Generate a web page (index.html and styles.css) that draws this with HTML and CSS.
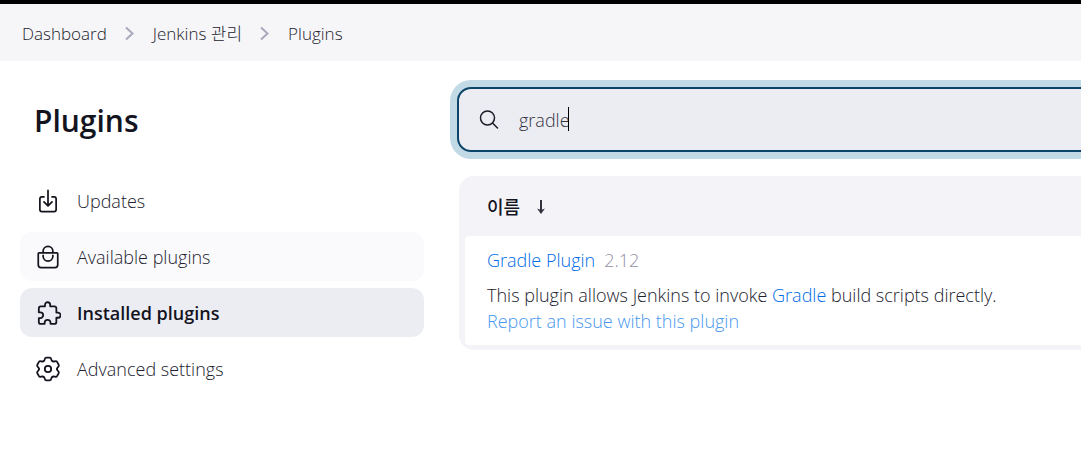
FILE: index.html
```html
<!DOCTYPE html>
<html lang="ko">
<head>
<meta charset="utf-8">
<title>Plugins - Jenkins</title>
<link rel="stylesheet" href="styles.css">
</head>
<body>
<header class="topbar">
  <nav aria-label="Breadcrumb">
    <ol class="crumbs">
      <li><a href="#">Dashboard</a></li>
      <li class="crumb-sep" aria-hidden="true"><svg viewBox="0 0 10 16" width="10" height="16"><path d="M1 1.500 7.500 7.500l-6.500 6"/></svg></li>
      <li><a href="#">Jenkins 관리</a></li>
      <li class="crumb-sep" aria-hidden="true"><svg viewBox="0 0 10 16" width="10" height="16"><path d="M1 1.500 7.500 7.500l-6.500 6"/></svg></li>
      <li><a href="#">Plugins</a></li>
    </ol>
  </nav>
</header>
<div class="page">
  <aside class="side">
    <h1 class="title">Plugins</h1>
    <nav class="tasks" aria-label="Plugins">
      <a class="task" href="#">
        <svg class="icon" viewBox="0 0 512 512"><path d="M336 176h40a40 40 0 0 1 40 40v208a40 40 0 0 1-40 40H136a40 40 0 0 1-40-40V216a40 40 0 0 1 40-40h40"/><path d="m176 272 80 80 80-80M256 48v288"/></svg>
        <span>Updates</span>
      </a>
      <a class="task task-hover" href="#">
        <svg class="icon" viewBox="0 0 512 512"><path d="M80 176h352a16 16 0 0 1 16 16v216c0 30.240-25.760 56-56 56H120c-30.240 0-56-24.510-56-54.750V192a16 16 0 0 1 16-16zM160 176v-32a96 96 0 0 1 96-96 96 96 0 0 1 96 96v32M160 224v16a96 96 0 0 0 96 96 96 96 0 0 0 96-96v-16"/></svg>
        <span>Available plugins</span>
      </a>
      <a class="task task-active" href="#" aria-current="page">
        <svg class="icon" viewBox="-25 5 498 498"><path d="M413.660 246.100H386a2 2 0 0 1-2-2v-77.240A38.860 38.860 0 0 0 345.140 128H267.900a2 2 0 0 1-2-2V98.340c0-27.140-21.500-49.860-48.640-50.330a49.530 49.530 0 0 0-50.400 49.510V126a2 2 0 0 1-2 2H87.620A39.740 39.740 0 0 0 48 167.620V238a2 2 0 0 0 2 2h26.910c29.370 0 53.680 25.480 54.090 54.850.42 29.870-23.510 57.150-53.290 57.150H50a2 2 0 0 0-2 2v70.380A39.740 39.740 0 0 0 87.620 464H158a2 2 0 0 0 2-2v-20.930c0-30.280 24.750-56.350 55-57.060 30.100-.7 57 20.310 57 50.280V462a2 2 0 0 0 2 2h71.140A38.860 38.860 0 0 0 384 425.140v-78a2 2 0 0 1 2-2h28.480c27.630 0 49.520-22.670 49.520-50.400s-23.200-48.640-50.340-48.640z"/></svg>
        <span>Installed plugins</span>
      </a>
      <a class="task" href="#">
        <svg class="icon icon-gear" viewBox="0 0 26 26">
          <defs><path id="lobe" d="M8.500 5.200C10.600 4 9 1.600 11.400 1.600h3.200C17 1.600 15.400 4 17.500 5.200"/></defs>
          <use href="#lobe"/>
          <use href="#lobe" transform="rotate(60 13 13)"/>
          <use href="#lobe" transform="rotate(120 13 13)"/>
          <use href="#lobe" transform="rotate(180 13 13)"/>
          <use href="#lobe" transform="rotate(240 13 13)"/>
          <use href="#lobe" transform="rotate(300 13 13)"/>
          <circle cx="13" cy="13" r="3.200"/>
        </svg>
        <span>Advanced settings</span>
      </a>
    </nav>
  </aside>
  <main class="content">
    <label class="search">
      <svg class="search-icon" viewBox="0 0 20 20" aria-hidden="true"><circle cx="8.500" cy="8" r="7"/><path d="m13.500 13 5 5"/></svg>
      <input class="search-input" type="text" value="gradle" aria-label="Search installed plugins">
      <span class="caret" aria-hidden="true"></span>
    </label>
    <div class="panel">
      <table class="plugins">
        <thead>
          <tr><th scope="col"><button class="sort" type="button"><span>이름</span><svg viewBox="0 0 10 16" width="10" height="16" aria-hidden="true"><path class="stem" d="M5 2v12"/><path class="tip" d="M1 10.500 5 16 9 10.500 5 12z"/></svg></button></th></tr>
        </thead>
        <tbody>
          <tr><td>
            <div class="name"><a href="#">Gradle Plugin</a><span class="version">2.12</span></div>
            <div class="desc">This plugin allows Jenkins to invoke <a href="#">Gradle</a> build scripts directly.</div>
            <a class="report" href="#">Report an issue with this plugin</a>
          </td></tr>
        </tbody>
      </table>
    </div>
  </main>
</div>
</body>
</html>
```
FILE: styles.css
```css
* { box-sizing: border-box; }
body {
  margin: 0;
  background: #fff;
  color: #22222e;
  font: 300 18px/26px "Open Sans", "Noto Sans CJK KR", sans-serif;
  overflow-x: hidden;
}
a { color: #006ce6; text-decoration: none; }
.topbar {
  border-top: 4px solid #000;
  background: #f6f6f8;
  padding: 17px 22px 14px;
}
.crumbs {
  display: flex;
  align-items: center;
  gap: 18px;
  margin: 0;
  padding: 0;
  list-style: none;
  font-size: 17px;
}
.crumbs a { color: #22222e; }
.crumb-sep { display: flex; }
.crumb-sep svg { fill: none; stroke: #a9a9bd; stroke-width: 2; }
.page {
  display: grid;
  grid-template-columns: 404px 1fr;
  column-gap: 33px;
  padding-left: 20px;
}
.side { padding-top: 40px; }
.title {
  margin: 0 0 35px 14px;
  color: #14141f;
  font-size: 30px;
  line-height: 40px;
  font-weight: 600;
}
.tasks { display: grid; gap: 7px; }
.task {
  display: flex;
  align-items: center;
  gap: 16px;
  height: 49px;
  padding: 0 15px;
  border-radius: 12px;
  color: #22222e;
}
.task-hover { background: #fafafc; }
.task-active { background: #ecedf3; color: #14141f; font-weight: 600; }
.icon {
  width: 26px;
  height: 26px;
  fill: none;
  stroke: #14141f;
  stroke-width: 34;
  stroke-linecap: round;
  stroke-linejoin: round;
}
.icon-gear { stroke-width: 1.8; }
.content { padding-top: 26px; margin-right: -20px; }
.search {
  position: relative;
  display: flex;
  align-items: center;
  gap: 20px;
  height: 65px;
  padding: 0 20px;
  border: 2px solid #0b4468;
  border-radius: 14px;
  background: #ecedf3;
  box-shadow: 0 0 0 7px #c2d9e6;
}
.search-icon {
  width: 20px;
  height: 20px;
  fill: none;
  stroke: #1c1c28;
  stroke-width: 1.5;
  stroke-linecap: round;
}
.search-input {
  flex: 1;
  min-width: 0;
  padding: 0;
  border: 0;
  outline: 0;
  background: transparent;
  color: #33333f;
  font: inherit;
}
.caret {
  position: absolute;
  left: 109px;
  top: 18px;
  width: 1px;
  height: 24px;
  background: #000;
}
.panel {
  margin: 24px 0 0 2px;
  padding: 0 6px 5px;
  border-radius: 15px;
  background: #f3f3f8;
}
.plugins { width: 100%; border-collapse: separate; border-spacing: 0; }
.plugins th { height: 60px; padding: 0 22px; text-align: left; }
.sort {
  display: flex;
  align-items: center;
  gap: 16px;
  padding: 0;
  border: 0;
  background: none;
  color: #14141f;
  font: 500 18px/26px "Noto Sans CJK KR", sans-serif;
}
.sort svg { fill: #33333f; stroke: #33333f; }
.stem { stroke-width: 2; }
.tip { stroke: none; }
.plugins td {
  padding: 11px 22px;
  border-radius: 4px;
  background: #fff;
}
.name { display: flex; gap: 9px; margin-bottom: 9px; }
.version { color: #9090a5; }
.report { color: #4798ee; }
```
